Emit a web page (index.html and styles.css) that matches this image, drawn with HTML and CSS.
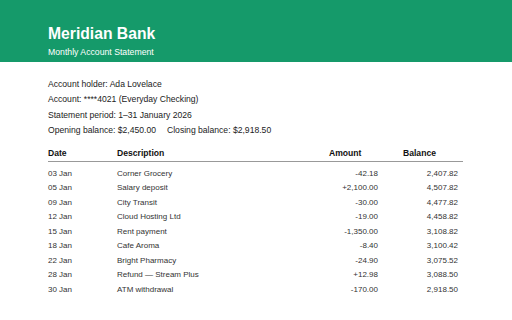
FILE: index.html
```html
<!DOCTYPE html>
<html>
<head>
<meta charset="utf-8">
<link rel="stylesheet" href="styles.css">
</head>
<body>
<header class="banner">
  <h1 class="bank-name">Meridian Bank</h1>
  <p class="bank-sub">Monthly Account Statement</p>
</header>
<main class="content">
  <section class="info">
    <p>Account holder: Ada Lovelace</p>
    <p>Account: ****4021 (Everyday Checking)</p>
    <p>Statement period: 1–31 January 2026</p>
    <p>Opening balance: $2,450.00<span class="gap"></span>Closing balance: $2,918.50</p>
  </section>
  <table class="tx">
    <thead>
      <tr><th class="c-date">Date</th><th class="c-desc">Description</th><th class="c-amt">Amount</th><th class="c-bal">Balance</th></tr>
    </thead>
    <tbody>
      <tr><td>03 Jan</td><td>Corner Grocery</td><td class="amt">-42.18</td><td class="bal">2,407.82</td></tr>
      <tr><td>05 Jan</td><td>Salary deposit</td><td class="amt">+2,100.00</td><td class="bal">4,507.82</td></tr>
      <tr><td>09 Jan</td><td>City Transit</td><td class="amt">-30.00</td><td class="bal">4,477.82</td></tr>
      <tr><td>12 Jan</td><td>Cloud Hosting Ltd</td><td class="amt">-19.00</td><td class="bal">4,458.82</td></tr>
      <tr><td>15 Jan</td><td>Rent payment</td><td class="amt">-1,350.00</td><td class="bal">3,108.82</td></tr>
      <tr><td>18 Jan</td><td>Cafe Aroma</td><td class="amt">-8.40</td><td class="bal">3,100.42</td></tr>
      <tr><td>22 Jan</td><td>Bright Pharmacy</td><td class="amt">-24.90</td><td class="bal">3,075.52</td></tr>
      <tr><td>28 Jan</td><td>Refund — Stream Plus</td><td class="amt">+12.98</td><td class="bal">3,088.50</td></tr>
      <tr><td>30 Jan</td><td>ATM withdrawal</td><td class="amt">-170.00</td><td class="bal">2,918.50</td></tr>
    </tbody>
  </table>
</main>
</body>
</html>
```
FILE: styles.css
```css
html, body { margin: 0; padding: 0; background: #fff; }
body { font-family: "Liberation Sans", Arial, sans-serif; color: #222; }
.banner {
  background: #159a6a;
  height: 62px;
  box-sizing: border-box;
  padding: 25px 48px 0;
  color: #fff;
}
.bank-name { margin: 0; font-size: 15.7px; line-height: 18px; font-weight: bold; }
.bank-sub { margin: 4px 0 0; font-size: 8.7px; line-height: 11px; }
.content { padding: 15px 48px 0; }
.info p { margin: 0; font-size: 8.6px; line-height: 15.3px; color: #222; }
.gap { display: inline-block; width: 11px; }
.tx {
  margin-top: 9px;
  width: 415px;
  border-collapse: collapse;
  table-layout: fixed;
  font-size: 8px;
  color: #333;
}
.tx th {
  text-align: left;
  font-weight: bold;
  color: #111;
  font-size: 8.6px;
  padding: 0 0 3px;
  border-bottom: 1.5px solid #999;
  height: 11px;
}
.tx td { padding: 0; height: 14.5px; }
.tx tbody tr:first-child td { padding-top: 4px; }
.c-date { width: 69px; }
.c-desc { width: 212px; }
.c-amt { width: 74px; }
.amt { text-align: right; padding-right: 25px !important; }
.bal { text-align: right; padding-right: 5px !important; }
```
